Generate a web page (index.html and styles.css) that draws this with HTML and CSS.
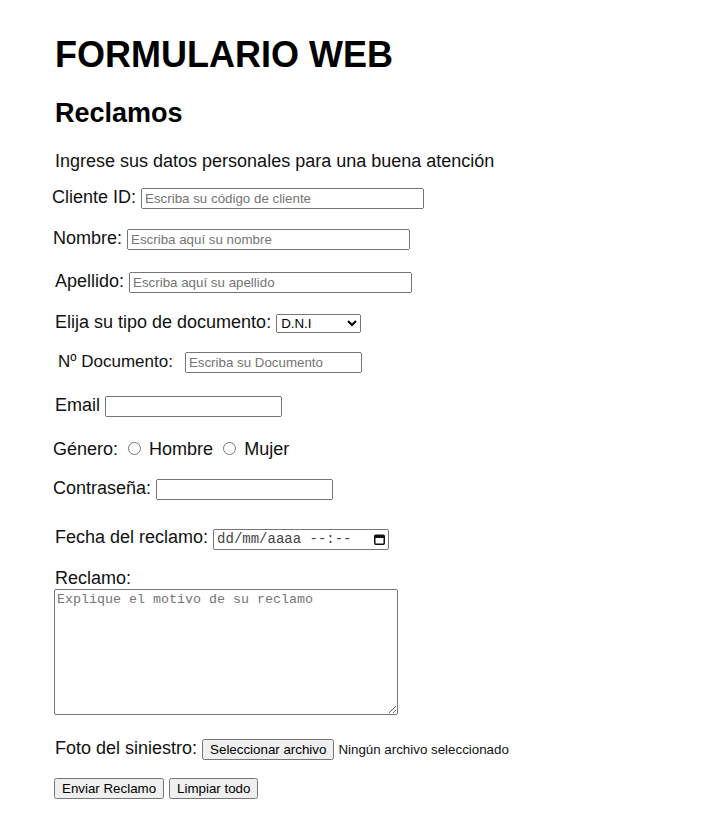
FILE: index.html
```html
<!DOCTYPE html>
<html lang="es">
<head>
<meta charset="utf-8">
<title>Formulario Web</title>
<link rel="stylesheet" href="styles.css">
</head>
<body>
<main class="page">
  <h1 class="title">FORMULARIO WEB</h1>
  <h2 class="subtitle">Reclamos</h2>
  <p class="intro">Ingrese sus datos personales para una buena atención</p>
  <form class="form">
    <div class="row row-cliente"><label for="cid">Cliente ID:</label> <input class="txt txt-long" id="cid" type="text" placeholder="Escriba su código de cliente"></div>
    <div class="row row-nombre"><label for="nom">Nombre:</label> <input class="txt txt-long" id="nom" type="text" placeholder="Escriba aquí su nombre"></div>
    <div class="row row-apellido"><label for="ape">Apellido:</label> <input class="txt txt-long" id="ape" type="text" placeholder="Escriba aquí su apellido"></div>
    <div class="row row-tipo"><label for="tipo">Elija su tipo de documento:</label> <select class="sel" id="tipo"><option>D.N.I</option><option>L.C</option><option>L.E</option><option>Pasaporte</option></select></div>
    <div class="row row-doc"><label class="doc-label" for="doc">Nº Documento:</label> <input class="txt txt-short txt-doc" id="doc" type="text" placeholder="Escriba su Documento"></div>
    <div class="row row-email"><label for="mail">Email</label> <input class="txt txt-short" id="mail" type="email"></div>
    <div class="row row-genero"><span>Género:</span> <input class="radio" type="radio" name="gen" id="gh"> <label for="gh">Hombre</label> <input class="radio" type="radio" name="gen" id="gm"> <label for="gm">Mujer</label></div>
    <div class="row row-pass"><label for="pw">Contraseña:</label> <input class="txt txt-short" id="pw" type="password"></div>
    <div class="row row-fecha"><label>Fecha del reclamo:</label> <span class="date"><span class="date-text">dd/mm/aaaa --:--</span><svg class="cal" width="11" height="11" viewBox="0 0 11 11" aria-hidden="true"><rect x="0.75" y="1.25" width="9.5" height="9" rx="1" fill="none" stroke="#111" stroke-width="1.5"/><rect x="0.75" y="1.25" width="9.5" height="2.75" fill="#111"/></svg></span></div>
    <div class="row row-reclamo"><label for="rec">Reclamo:</label></div>
    <textarea class="area" id="rec" placeholder="Explique el motivo de su reclamo"></textarea>
    <div class="row row-foto"><span>Foto del siniestro:</span> <button class="btn file-btn" type="button">Seleccionar archivo</button><span class="file-name">Ningún archivo seleccionado</span></div>
    <div class="row row-actions"><button class="btn" type="submit">Enviar Reclamo</button> <button class="btn" type="reset">Limpiar todo</button></div>
  </form>
</main>
</body>
</html>
```
FILE: styles.css
```css
html, body {
  margin: 0;
  padding: 0;
  background: #ffffff;
}

body {
  font-family: "Liberation Sans", Arial, sans-serif;
  color: #000;
}

.page {
  padding: 0 0 40px 55px;
}

.title {
  font-size: 36px;
  font-weight: bold;
  line-height: normal;
  margin: 34px 0 0 0;
}

.subtitle {
  font-size: 27px;
  font-weight: bold;
  line-height: normal;
  margin: 22px 0 0 0;
}

.intro {
  font-size: 18px;
  line-height: normal;
  margin: 22px 0 0 0;
  color: #111;
}

.form {
  margin: 0;
}

.row {
  font-size: 18px;
  line-height: normal;
  color: #111;
}

.row-cliente { margin-top: 15px; margin-left: -3px; }
.row-nombre { margin-top: 19px; margin-left: -2px; }
.row-apellido { margin-top: 21px; margin-left: 0; }
.row-tipo { margin-top: 19px; }
.row-doc { margin-top: 18px; margin-left: 3px; }
.row-email { margin-top: 22px; }
.row-genero { margin-top: 22px; margin-left: -2px; }
.row-pass { margin-top: 18px; margin-left: -2px; }
.row-fecha { margin-top: 27px; }
.row-reclamo { margin-top: 18px; }
.row-foto { margin-top: 23px; }
.row-actions { margin-top: 17px; margin-left: -1px; }

.doc-label {
  font-size: 17px;
}

.txt,
.sel,
.btn,
.file-name {
  font-family: "Liberation Sans", Arial, sans-serif;
  font-size: 13.333px;
}

.txt {
  box-sizing: border-box;
  height: 21px;
}

.txt-long { width: 283px; }
.txt-short { width: 177px; }
.txt-doc { margin-left: 7px; }

.sel {
  width: 85px;
}

.radio {
  margin: 3px 3px 0 5px;
}

.date {
  display: inline-flex;
  align-items: center;
  box-sizing: border-box;
  width: 176px;
  height: 21px;
  border: 1px solid #767676;
  border-radius: 2px;
  padding: 0 3px 0 3px;
  background: #fff;
}

.date-text {
  flex: 1;
  font-family: "Liberation Mono", "Courier New", monospace;
  font-size: 14px;
  color: #444;
  line-height: 15px;
}

.cal {
  display: block;
}

.area {
  display: block;
  box-sizing: border-box;
  width: 344px;
  height: 126px;
  margin: 0 0 0 -1px;
  font-family: "Liberation Mono", "Courier New", monospace;
  font-size: 13.333px;
}

.file-btn {
  margin-right: 4px;
}

.file-name {
  color: #111;
}
```
